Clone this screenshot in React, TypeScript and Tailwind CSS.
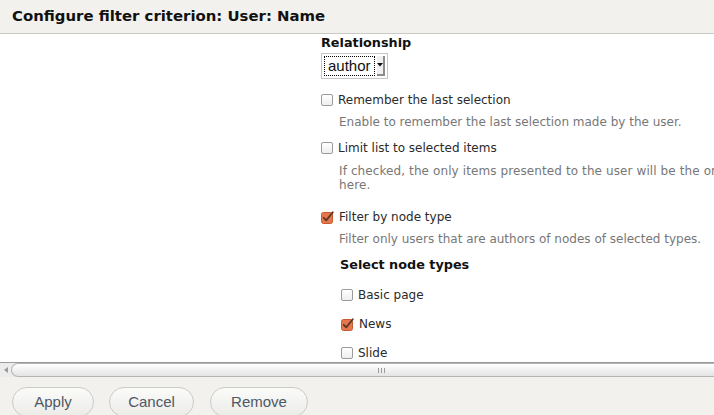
import React from 'react'

const sans = { fontFamily: '"DejaVu Sans", sans-serif' }

function Box({ checked = false }: { checked?: boolean }) {
  if (checked) {
    return (
      <svg width="13" height="13" viewBox="0 0 13 13" className="mt-[1px] shrink-0">
        <rect x="0.5" y="1.5" width="11" height="11" rx="2" fill="#e8764c" stroke="#c45a32" />
        <path d="M2.8 6.8 L5.2 9.4 L11.8 1.2" fill="none" stroke="#5a3626" strokeWidth="1.8" strokeLinecap="round" strokeLinejoin="round" />
      </svg>
    )
  }
  return (
    <div className="mt-[1px] h-[12px] w-[12px] shrink-0 rounded-[2px] border border-[#9b9b9b] bg-gradient-to-b from-white to-[#eeeeee]" />
  )
}

function Check({ label, checked, className = '' }: { label: string; checked?: boolean; className?: string }) {
  return (
    <div className={`flex items-start gap-[5px] text-[12px] leading-[14px] text-[#2a2a2a] ${className}`}>
      <Box checked={checked} />
      <span>{label}</span>
    </div>
  )
}

function Desc({ children, className = '' }: { children: React.ReactNode; className?: string }) {
  return <div className={`ml-[18px] w-[460px] text-[12px] leading-[14px] text-[#777] ${className}`}>{children}</div>
}

export default function App() {
  return (
    <div className="flex h-[415px] w-[714px] flex-col overflow-hidden bg-white" style={sans}>
      {/* Title */}
      <div className="flex h-[34px] shrink-0 items-center border-b border-[#c9c9c6] bg-[#f2f1ed] pl-[12px]">
        <h1 className="text-[14.9px] font-bold text-[#111]">Configure filter criterion: User: Name</h1>
      </div>

      {/* Body */}
      <div className="flex h-[328px] shrink-0 overflow-hidden">
        <div className="w-[321px] shrink-0" />
        <div className="w-[540px] shrink-0 pt-[1px]">
          <div className="text-[12.8px] font-bold leading-[15px] text-[#111]">Relationship</div>
          <div className="mt-[3px] flex h-[26px] w-[67px] items-stretch border border-[#c6c6c6] bg-white p-[2px]">
            <div
              className="flex items-center border border-dotted border-black px-[3px] text-[15px] text-[#111]"
              style={{ fontFamily: '"Liberation Sans", Arial, sans-serif' }}
            >
              author
            </div>
            <div className="ml-[2px] flex w-[12px] items-center justify-center border-b-2 border-r-2 border-[#8c8c8c] bg-[#f0f0f0]">
              <svg width="6" height="4" viewBox="0 0 6 4">
                <path d="M0 0 H6 L3 3.5 Z" fill="#111" />
              </svg>
            </div>
          </div>

          <Check label="Remember the last selection" className="mt-[14px]" />
          <Desc className="mt-[8px]">Enable to remember the last selection made by the user.</Desc>

          <Check label="Limit list to selected items" className="mt-[12px]" />
          <Desc className="mt-[9px] tracking-[0.1px]">If checked, the only items presented to the user will be the ones selected here.</Desc>

          <Check label="Filter by node type" checked className="mt-[18px]" />
          <Desc className="mt-[8px]">Filter only users that are authors of nodes of selected types.</Desc>

          <div className="ml-[19px] mt-[11px] text-[12.8px] font-bold leading-[15px] text-[#111]">Select node types</div>
          <div className="ml-[20px] mt-[16px] flex flex-col gap-[15px]">
            <Check label="Basic page" />
            <Check label="News" checked />
            <Check label="Slide" />
          </div>
        </div>
      </div>

      {/* Horizontal scrollbar */}
      <div className="flex h-[15px] shrink-0 border-t border-[#9a9a9a] bg-[#ececec]">
        <div className="flex w-[11px] items-center justify-center">
          <svg width="4" height="6" viewBox="0 0 4 6">
            <path d="M4 0 V6 L0 3 Z" fill="#9a9a9a" />
          </svg>
        </div>
        <div className="flex flex-1 items-center justify-center rounded-l-[7px] border border-r-0 border-[#b4b4b4] bg-gradient-to-b from-white to-[#e4e4e4] pl-[37px]">
          <div className="flex gap-[2px]">
            <div className="h-[5px] w-px bg-[#9a9a9a]" />
            <div className="h-[5px] w-px bg-[#9a9a9a]" />
            <div className="h-[5px] w-px bg-[#9a9a9a]" />
          </div>
        </div>
      </div>

      {/* Footer */}
      <div
        className="flex flex-1 gap-[15px] bg-[#f2f1ed] pl-[12px] pt-[10px]"
        style={{ fontFamily: '"Liberation Sans", Arial, sans-serif' }}
      >
        <button className="h-[30px] w-[82px] shrink-0 rounded-full border border-[#cacac6] bg-gradient-to-b from-[#fbfbfa] to-[#ebebe8] text-[15px] text-[#4f5863]">
          Apply
        </button>
        <button className="h-[30px] w-[85px] shrink-0 rounded-full border border-[#cacac6] bg-gradient-to-b from-[#fbfbfa] to-[#ebebe8] text-[15px] text-[#4f5863]">
          Cancel
        </button>
        <button className="ml-px h-[30px] w-[98px] shrink-0 rounded-full border border-[#cacac6] bg-gradient-to-b from-[#fbfbfa] to-[#ebebe8] text-[15px] text-[#4f5863]">
          Remove
        </button>
      </div>
    </div>
  )
}
